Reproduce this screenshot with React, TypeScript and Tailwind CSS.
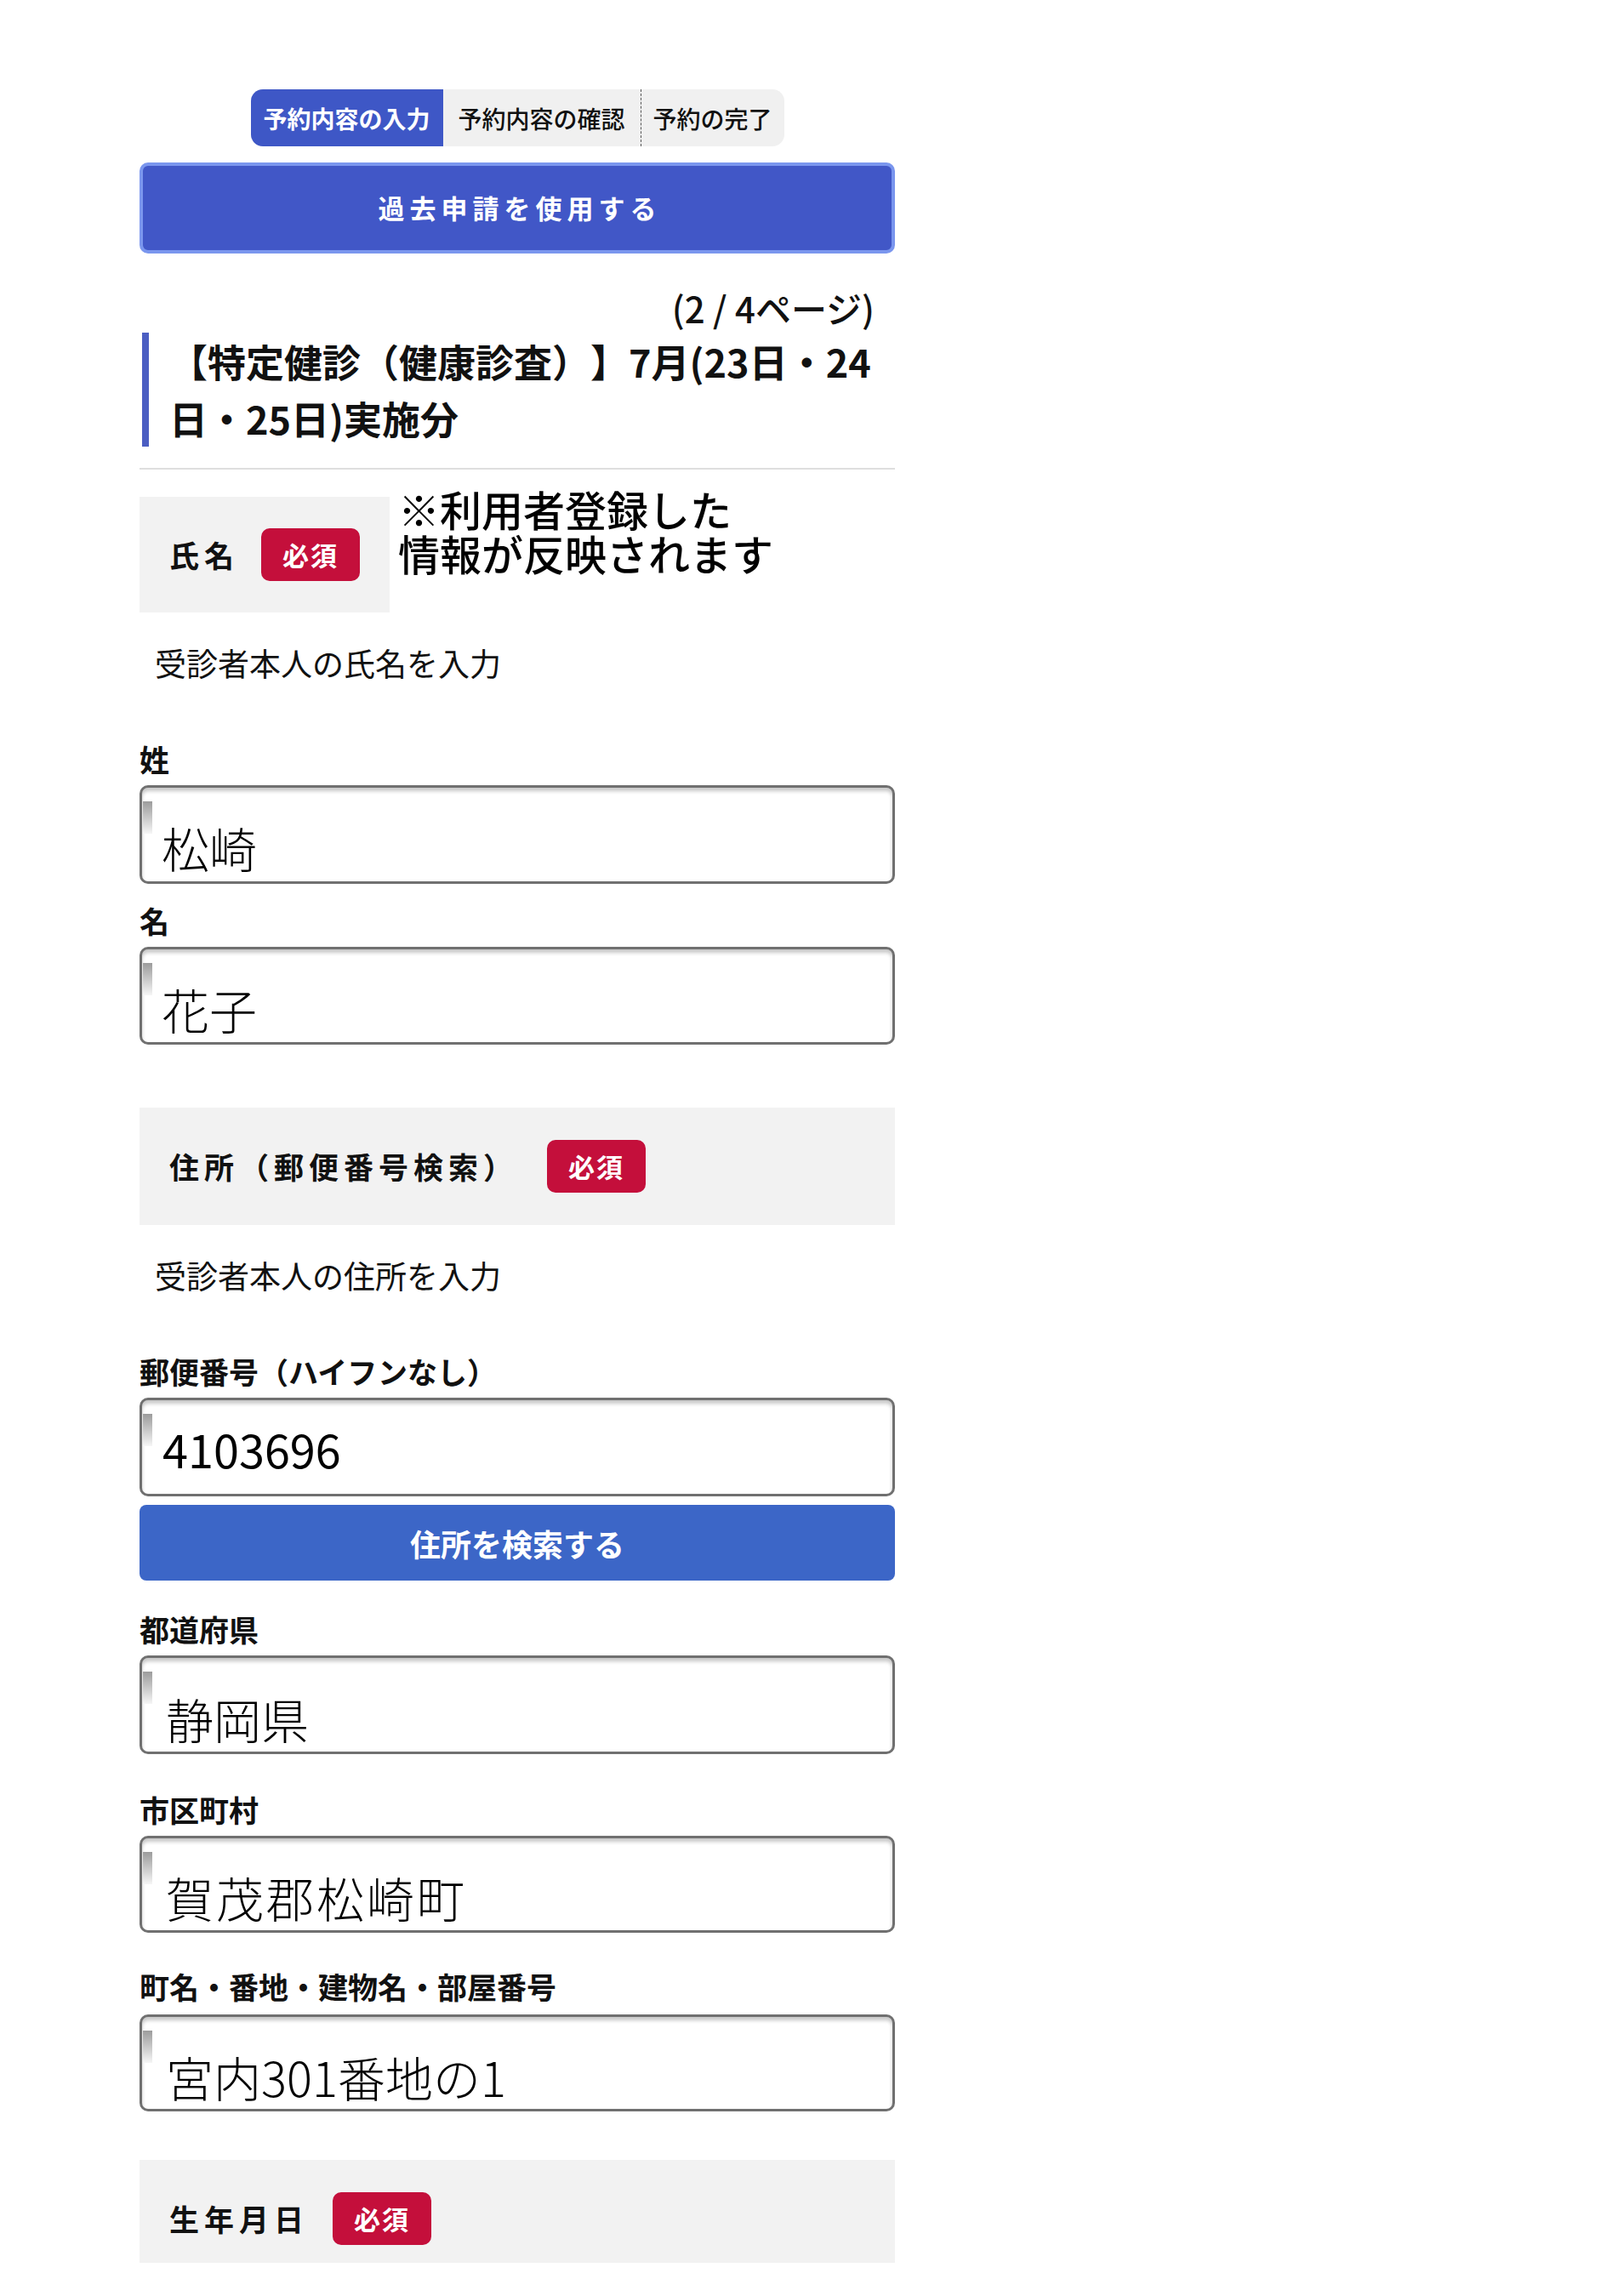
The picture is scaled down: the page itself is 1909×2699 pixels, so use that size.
import React from "react";

function Badge({ className }: { className: string }) {
  return (
    <div
      className={
        "flex h-[62px] w-[116px] shrink-0 items-center justify-center rounded-[10px] bg-[#c40f3b] text-[31px] font-bold tracking-[2px] text-white " +
        className
      }
    >
      必須
    </div>
  );
}

function Field({
  value,
  box,
  text,
}: {
  value: string;
  box: string;
  text: string;
}) {
  return (
    <div
      className={
        "relative flex items-end rounded-[10px] border-[3px] border-[#707070] bg-white shadow-[inset_0_4px_4px_rgba(0,0,0,0.22)] " +
        box
      }
    >
      <div className="absolute left-[1px] top-[16px] h-[38px] w-[11px] bg-linear-to-b from-[#9c9c9c] to-[#f6f6f6]" />
      <span className={"leading-none font-light text-black " + text}>{value}</span>
    </div>
  );
}

export default function App() {
  return (
    <div className="min-h-[2699px] w-full bg-white font-['Noto_Sans_CJK_JP','Noto_Sans',sans-serif] text-[#111] [text-spacing-trim:space-all]">
      <div className="ml-[164px] flex w-[888px] flex-col pt-[105px]">
        {/* Step tabs */}
        <div className="mx-auto flex h-[67px] overflow-hidden rounded-[14px] bg-[#f0f0f0]">
          <div className="flex w-[226px] items-center justify-center bg-[#3e57c6] text-[28px] font-bold text-white">
            予約内容の入力
          </div>
          <div className="flex w-[232px] items-center justify-center text-[28px] font-medium">
            予約内容の確認
          </div>
          <div className="flex w-[169px] items-center justify-center border-l border-dashed border-[#555] text-[28px] font-medium">
            予約の完了
          </div>
        </div>

        {/* Past application button */}
        <div className="mt-[19px] flex h-[107px] items-center justify-center rounded-[10px] border-[4px] border-[#7a96ee] bg-[#4157c7] pl-[6px] text-[31px] font-bold tracking-[6px] text-white">
          過去申請を使用する
        </div>

        {/* Page indicator */}
        <div className="mt-[40px] pr-[24px] text-right text-[42px] leading-[48px] font-medium">
          (2 / 4ページ)
        </div>

        {/* Title */}
        <div className="ml-[3px] mt-[5px] border-l-[8px] border-[#4b5ec2] pl-[24px] text-[45px] font-bold leading-[67px]">
          【特定健診（健康診査）】7月(23日・24
          <br />
          日・25日)実施分
        </div>

        <div className="mt-[25px] h-[2px] bg-[#dedede]" />

        {/* 氏名 */}
        <div className="mt-[32px] flex items-start">
          <div className="flex h-[136px] w-[294px] items-center bg-[#f2f2f2] pl-[35px]">
            <span className="text-[35px] font-bold tracking-[6px]">氏名</span>
            <Badge className="ml-[26px]" />
          </div>
          <div className="-mt-[12px] ml-[10px] text-[49px] leading-[52px] font-medium text-black">
            ※利用者登録した
            <br />
            情報が反映されます
          </div>
        </div>

        <div className="mt-[32px] pl-[18px] text-[37px] leading-[54px]">
          受診者本人の氏名を入力
        </div>

        <div className="mt-[63px] text-[35px] font-semibold leading-[46px]">姓</div>
        <Field
          value="松崎"
          box="mt-[8px] h-[116px] pl-[23px] pb-[12px]"
          text="text-[56px]"
        />

        <div className="mt-[20px] text-[35px] font-semibold leading-[46px]">名</div>
        <Field
          value="花子"
          box="mt-[8px] h-[115px] pl-[23px] pb-[11px]"
          text="text-[56px]"
        />

        {/* 住所 */}
        <div className="mt-[74px] flex h-[138px] items-center bg-[#f2f2f2] pl-[35px]">
          <span className="text-[35px] font-bold tracking-[6px]">住所（郵便番号検索）</span>
          <Badge className="ml-[34px]" />
        </div>

        <div className="mt-[32px] pl-[18px] text-[37px] leading-[54px]">
          受診者本人の住所を入力
        </div>

        <div className="mt-[63px] text-[35px] font-semibold leading-[46px]">
          郵便番号（ハイフンなし）
        </div>
        <Field
          value="4103696"
          box="mt-[8px] h-[116px] pl-[24px] pb-[26px]"
          text="text-[54px] font-normal"
        />

        <div className="mt-[10px] flex h-[89px] items-center justify-center rounded-[8px] bg-[#3c66c7] text-[36px] font-bold text-white">
          住所を検索する
        </div>

        <div className="mt-[34px] text-[35px] font-semibold leading-[46px]">都道府県</div>
        <Field
          value="静岡県"
          box="mt-[8px] h-[116px] pl-[28px] pb-[11px]"
          text="text-[56px]"
        />

        <div className="mt-[42px] text-[35px] font-semibold leading-[46px]">市区町村</div>
        <Field
          value="賀茂郡松崎町"
          box="mt-[8px] h-[114px] pl-[28px] pb-[11px]"
          text="text-[56px] tracking-[3px]"
        />

        <div className="mt-[40px] text-[35px] font-semibold leading-[46px]">
          町名・番地・建物名・部屋番号
        </div>
        <Field
          value="宮内301番地の1"
          box="mt-[10px] h-[114px] pl-[28px] pb-[10px]"
          text="text-[56px]"
        />

        {/* 生年月日 */}
        <div className="mt-[57px] flex h-[121px] items-start bg-[#f2f2f2] pl-[35px] pt-[38px]">
          <span className="mt-[10px] text-[35px] font-bold leading-[42px] tracking-[6px]">生年月日</span>
          <Badge className="ml-[28px]" />
        </div>
      </div>
    </div>
  );
}
